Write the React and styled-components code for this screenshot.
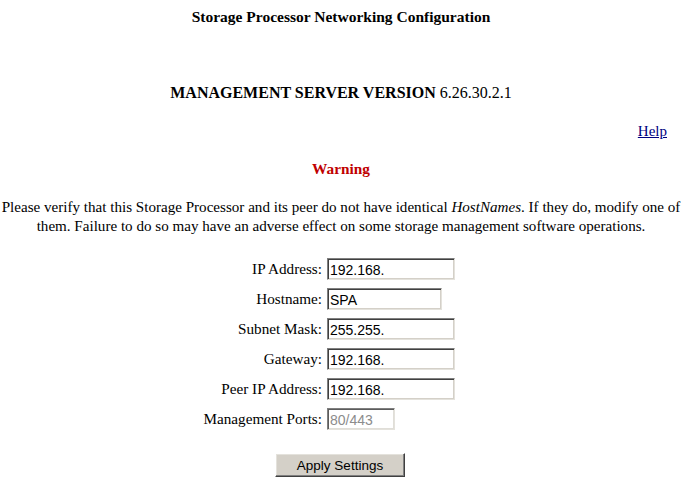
import React from "react";
import styled, { createGlobalStyle } from "styled-components";

const GlobalStyle = createGlobalStyle`
  html, body {
    margin: 0;
    padding: 0;
    background: #ffffff;
  }
  body {
    font-family: "Liberation Serif", "Times New Roman", serif;
    color: #000000;
  }
`;

const Page = styled.div`
  width: 682px;
  display: flex;
  flex-direction: column;
  align-items: stretch;
`;

const Title = styled.div`
  margin-top: 9px;
  font-size: 15.5px;
  line-height: 16px;
  font-weight: bold;
  text-align: center;
`;

const Version = styled.div`
  margin-top: 58px;
  font-size: 16px;
  line-height: 20px;
  text-align: center;

  b {
    font-weight: bold;
  }
`;

const HelpRow = styled.div`
  margin-top: 19px;
  padding-right: 15px;
  font-size: 15px;
  line-height: 18px;
  text-align: right;

  a {
    color: #000080;
    text-decoration: underline;
  }
`;

const Warning = styled.div`
  margin-top: 20px;
  font-size: 15.3px;
  line-height: 18px;
  font-weight: bold;
  color: #c00000;
  text-align: center;
`;

const Notice = styled.p`
  margin: 20px -20px 0;
  font-size: 15.1px;
  line-height: 19px;
  text-align: center;
`;

const Form = styled.div`
  margin-top: 22px;
  display: grid;
  grid-template-columns: 322px auto;
  column-gap: 5px;
  row-gap: 8px;
  align-items: center;
`;

const Label = styled.label`
  font-size: 15.2px;
  line-height: 22px;
  text-align: right;
  white-space: nowrap;
`;

const Field = styled.input`
  box-sizing: border-box;
  width: ${(p) => p.$w}px;
  height: 22px;
  margin: 0;
  padding: 1px 2px 0;
  font-family: "Liberation Sans", Arial, sans-serif;
  font-size: 14px;
  color: #000000;
  background: #ffffff;
  border: 1px solid;
  border-color: #808080 #e4e2dc #e4e2dc #808080;
  box-shadow: inset 1px 1px 0 #404040, inset -1px -1px 0 #d4d0c8;
  outline: none;

  &:disabled {
    color: #8c8c8c;
    background: #ffffff;
    box-shadow: inset 1px 1px 0 #5c5c5c, inset -1px -1px 0 #e0ded8;
  }
`;

const Actions = styled.div`
  margin-top: 23px;
  display: flex;
  justify-content: center;
  padding-right: 2px;
`;

const Button = styled.button`
  box-sizing: border-box;
  width: 130px;
  height: 24px;
  padding: 0;
  font-family: "Liberation Sans", Arial, sans-serif;
  font-size: 13.5px;
  color: #000000;
  background: #d4d0c8;
  border: 1px solid;
  border-color: #ffffff #404040 #404040 #ffffff;
  box-shadow: inset -1px -1px 0 #808080, inset 1px 1px 0 #e4e2dc;
`;

const fields = [
  { label: "IP Address:", value: "192.168.", w: 128 },
  { label: "Hostname:", value: "SPA", w: 115 },
  { label: "Subnet Mask:", value: "255.255.", w: 128 },
  { label: "Gateway:", value: "192.168.", w: 128 },
  { label: "Peer IP Address:", value: "192.168.", w: 128 },
  { label: "Management Ports:", value: "80/443", w: 68, disabled: true },
];

export default function App() {
  return (
    <>
      <GlobalStyle />
      <Page>
        <Title>Storage Processor Networking Configuration</Title>
        <Version>
          <b>MANAGEMENT SERVER VERSION</b> 6.26.30.2.1
        </Version>
        <HelpRow>
          <a href="#help">Help</a>
        </HelpRow>
        <Warning>Warning</Warning>
        <Notice>
          Please verify that this Storage Processor and its peer do not have identical{" "}
          <i>HostNames</i>. If they do, modify one of
          <br />
          them. Failure to do so may have an adverse effect on some storage management software operations.
        </Notice>
        <Form>
          {fields.map((f) => (
            <React.Fragment key={f.label}>
              <Label>{f.label}</Label>
              <div>
                <Field $w={f.w} defaultValue={f.value} disabled={f.disabled} />
              </div>
            </React.Fragment>
          ))}
        </Form>
        <Actions>
          <Button>Apply Settings</Button>
        </Actions>
      </Page>
    </>
  );
}
